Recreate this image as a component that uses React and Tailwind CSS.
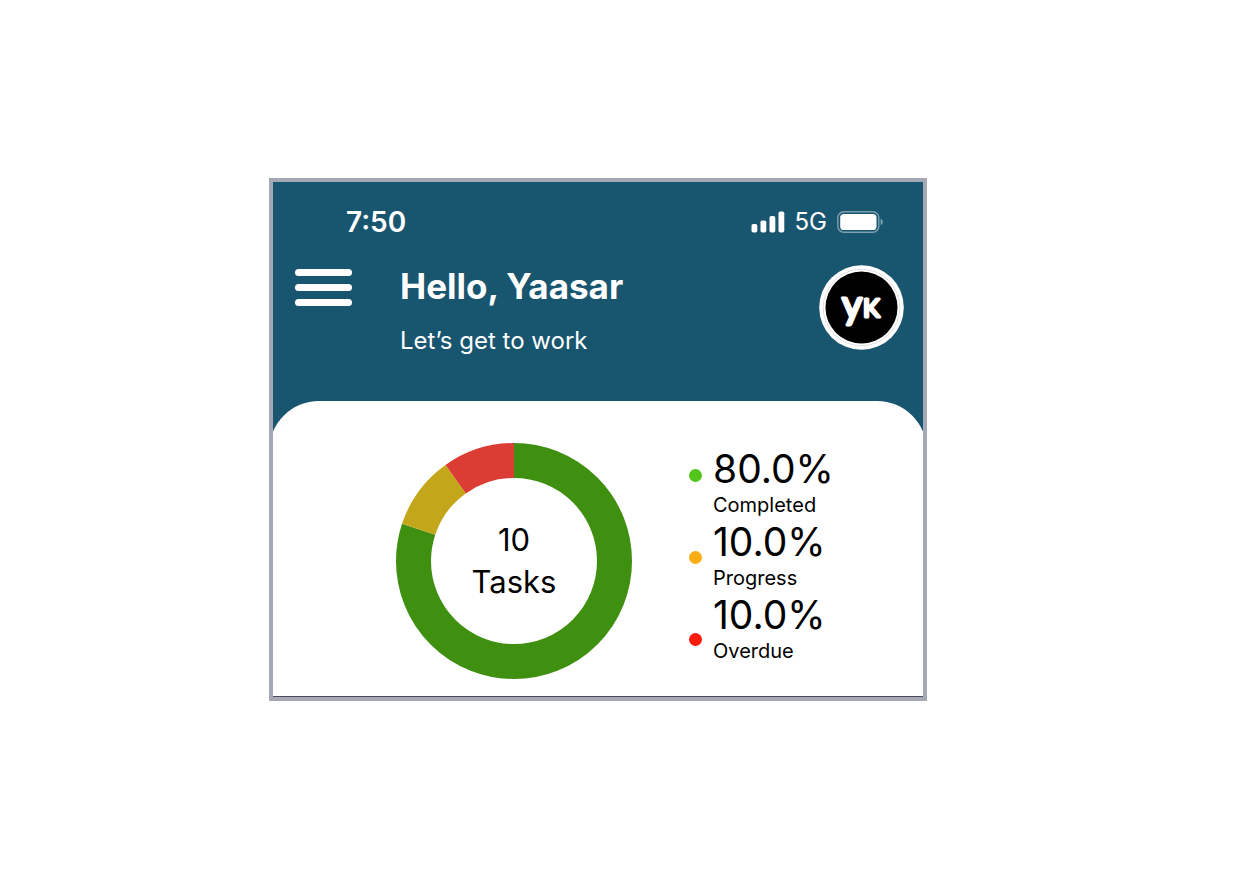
const stats = [
  { label: 'Completed', value: 80, color: '#3f8f11', dot: 'bg-[#52c41a]' },
  { label: 'Progress', value: 10, color: '#c3a619', dot: 'bg-[#faad14]' },
  { label: 'Overdue', value: 10, color: '#db3d34', dot: 'bg-[#fb1a0c]' },
];

function SignalIcon() {
  return (
    <svg className="w-[34px] h-[22px]" viewBox="0 0 34 22" fill="#fff" aria-hidden="true">
      <rect x="0.5" y="13" width="5.8" height="8.5" rx="1.8" />
      <rect x="9.5" y="9.5" width="5.8" height="12" rx="1.8" />
      <rect x="18.5" y="5" width="5.8" height="16.5" rx="1.8" />
      <rect x="27.5" y="0.5" width="5.8" height="21" rx="1.8" />
    </svg>
  );
}

function BatteryIcon() {
  return (
    <svg className="w-[46px] h-[22px]" viewBox="0 0 46 22" aria-hidden="true">
      <rect x="0.8" y="0.8" width="41" height="20.4" rx="6" fill="none" stroke="#7fa0b1" strokeWidth="1.4" />
      <rect x="3.2" y="3" width="36.3" height="16" rx="3.6" fill="#fff" />
      <path d="M43.6 7.8c1.4.6 2.2 1.8 2.2 3.2s-.8 2.6-2.2 3.2z" fill="#7fa0b1" />
    </svg>
  );
}

function Avatar() {
  return (
    <svg className="w-[85px] h-[85px] shrink-0" viewBox="0 0 85 85" role="img" aria-label="YK">
      <circle cx="42.5" cy="42.5" r="42.3" fill="#fff" />
      <circle cx="42.5" cy="42.5" r="38.3" fill="none" stroke="#d3d7da" strokeWidth="0.8" />
      <circle cx="42.5" cy="42.5" r="36" fill="#000" />
      <g
        fill="#fff"
        stroke="#fff"
        strokeWidth="3"
        strokeLinejoin="round"
        fontFamily="Lato, sans-serif"
        fontWeight="400"
      >
        <text x="23" y="53" fontSize="39">y</text>
        <text x="44" y="52" fontSize="25">K</text>
      </g>
    </svg>
  );
}

function Donut() {
  const r = 100.5;
  const length = 2 * Math.PI * r;
  let start = 0;

  return (
    <div className="grid w-[236px] shrink-0 place-items-center">
      <svg className="col-start-1 row-start-1 w-full -rotate-90" viewBox="0 0 236 236" aria-hidden="true">
        {stats.map(({ label, value, color }) => {
          const offset = start;
          start += value;
          return (
            <circle
              key={label}
              cx="118"
              cy="118"
              r={r}
              fill="none"
              stroke={color}
              strokeWidth="35"
              strokeDasharray={`${(length * value) / 100} ${length}`}
              strokeDashoffset={(-length * offset) / 100}
            />
          );
        })}
      </svg>
      <p className="col-start-1 row-start-1 text-center text-[31px] leading-[42px]">
        10
        <br />
        Tasks
      </p>
    </div>
  );
}

function StatusBar() {
  return (
    <div className="flex items-center justify-between pt-[22px] pr-10 pl-[73px]">
      <span className="text-[28px] leading-9 font-semibold">7:50</span>
      <div className="flex items-center gap-[10px]">
        <SignalIcon />
        <span className="text-2xl leading-9">5G</span>
        <BatteryIcon />
      </div>
    </div>
  );
}

function Header() {
  return (
    <header className="flex items-start pt-[25px] pr-[19px] pb-11 pl-[22px]">
      <button type="button" aria-label="Open menu" className="mt-1 flex w-[57px] shrink-0 flex-col gap-2">
        <span className="h-[7px] w-full rounded-full bg-white" />
        <span className="h-[7px] w-full rounded-full bg-white" />
        <span className="h-[7px] w-full rounded-full bg-white" />
      </button>
      <div className="ml-12 grow">
        <h1 className="text-[35px] leading-[42px] font-bold">Hello, Yaasar</h1>
        <p className="mt-[18px] text-2xl leading-8">Let’s get to work</p>
      </div>
      <Avatar />
    </header>
  );
}

function Legend() {
  return (
    <div className="flex gap-[11px]">
      <div className="flex flex-col justify-between pt-[23px] pb-[19px]">
        {stats.map(({ label, dot }) => (
          <span key={label} className={`size-[13px] rounded-full ${dot}`} />
        ))}
      </div>
      <dl>
        {stats.map(({ label, value }) => (
          <div key={label} className="flex flex-col-reverse">
            <dt className="text-xl leading-7">{label}</dt>
            <dd className="text-[39px] leading-[45px]">{value.toFixed(1)}%</dd>
          </div>
        ))}
      </dl>
    </div>
  );
}

export default function App() {
  return (
    <main className="flex min-h-screen items-start justify-center bg-white pt-[178px] pr-[58px] font-['Inter',sans-serif]">
      <div className="w-full max-w-[658px] border-4 border-[#a5a9b6]">
        <div className="overflow-hidden border-b border-[#4d4a5c] bg-[#18556f] text-white">
          <StatusBar />
          <Header />
          <section className="-mx-1 flex items-start rounded-t-[50px] bg-white pt-[42px] pb-[17px] pl-[127px] text-black">
            <Donut />
            <div className="mt-[3px] ml-[57px]">
              <Legend />
            </div>
          </section>
        </div>
      </div>
    </main>
  );
}
